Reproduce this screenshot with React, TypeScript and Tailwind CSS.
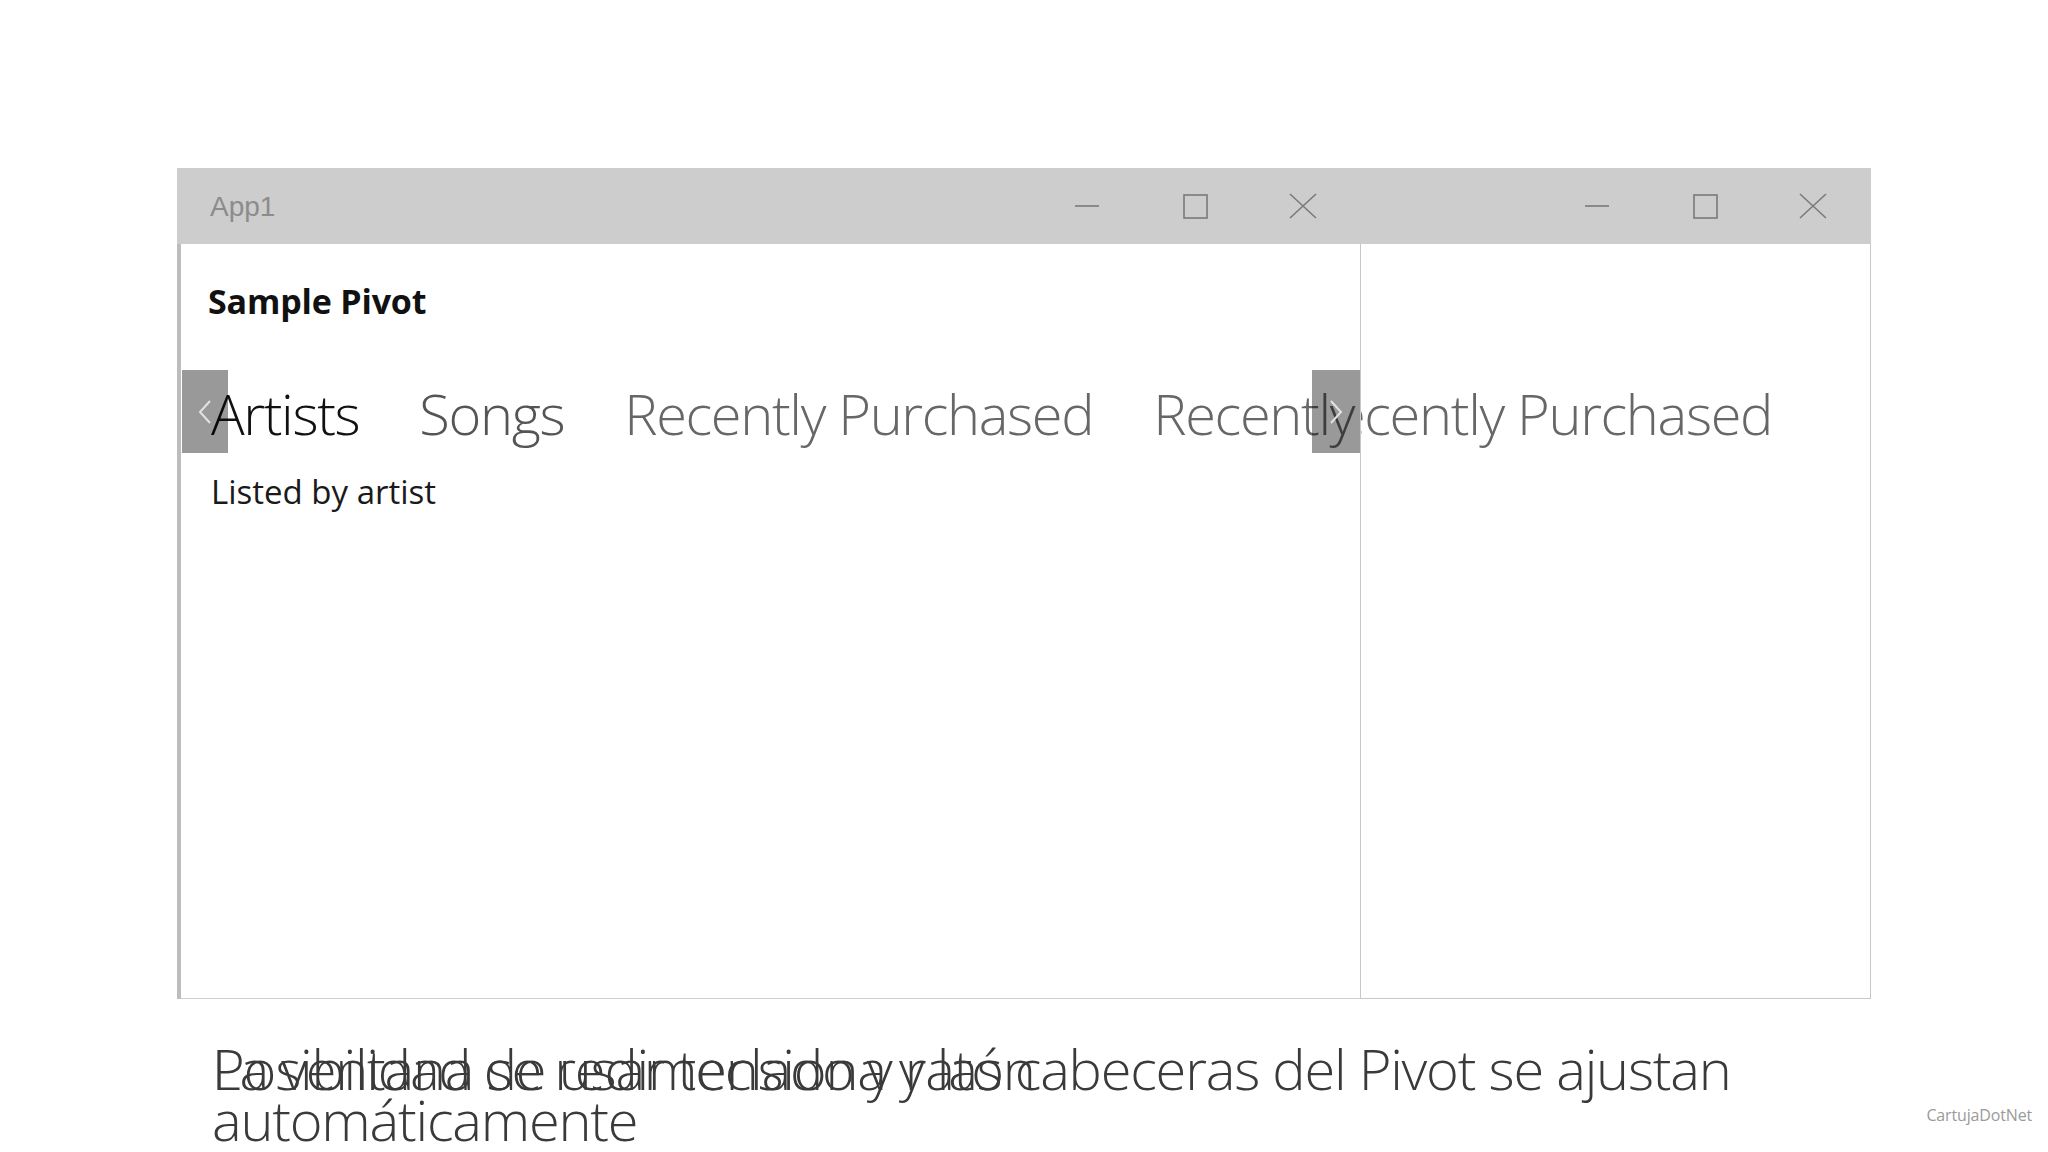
import React from "react";

const headers = [
  { label: "Artists", color: "text-[#111111]" },
  { label: "Songs", color: "text-[#555555]" },
  { label: "Recently Purchased", color: "text-[#676767]" },
  { label: "Recently Purchased", color: "text-[#676767]" },
];

function CaptionButtons() {
  return (
    <div className="flex items-center">
      <div className="w-[108px] h-[76px] flex items-center justify-center">
        <svg width="26" height="4" viewBox="0 0 26 4">
          <line x1="1" y1="2" x2="25" y2="2" stroke="#7a7a7a" strokeWidth="1.6" />
        </svg>
      </div>
      <div className="w-[108px] h-[76px] flex items-center justify-center">
        <svg width="25" height="25" viewBox="0 0 25 25">
          <rect x="1" y="1" width="23" height="23" fill="none" stroke="#7a7a7a" strokeWidth="1.6" />
        </svg>
      </div>
      <div className="w-[108px] h-[76px] flex items-center justify-center">
        <svg width="28" height="26" viewBox="0 0 28 26">
          <path d="M1 1 L27 25 M27 1 L1 25" stroke="#7a7a7a" strokeWidth="1.6" fill="none" />
        </svg>
      </div>
    </div>
  );
}

function Chevron({ dir }: { dir: "left" | "right" }) {
  return (
    <svg width="16" height="26" viewBox="0 0 16 26">
      {dir === "left" ? (
        <polyline points="13,2 3,13 13,24" fill="none" stroke="#e2e2e2" strokeWidth="2" />
      ) : (
        <polyline points="3,2 13,13 3,24" fill="none" stroke="#e2e2e2" strokeWidth="2" />
      )}
    </svg>
  );
}

export default function App() {
  return (
    <div className="w-[2048px] h-[1152px] overflow-hidden bg-white font-['Open_Sans',sans-serif]">
      {/* Window */}
      <div className="ml-[177px] pt-[168px] w-[1694px]">
        {/* Title bar */}
        <div className="flex h-[76px] bg-[#cdcdcd]">
          <div className="w-[1183px] flex items-center justify-between pl-[33px] pr-[3px]">
            <span className="text-[28px] text-[#8c8c8c] font-['Liberation_Sans',sans-serif] mt-[2px]">App1</span>
            <CaptionButtons />
          </div>
          <div className="flex-1 flex items-center justify-end pr-[4px]">
            <CaptionButtons />
          </div>
        </div>

        {/* Body */}
        <div className="flex h-[755px] border-l-[4px] border-[#bdbdbd]">
          {/* Left pane */}
          <div className="w-[1179px] flex flex-col pt-[37px] border-b border-[#cfcfcf]">
            <h1 className="pl-[27px] text-[34px] leading-[40px] font-bold text-[#111111] tracking-[-0.005em]">
              Sample Pivot
            </h1>
            <div className="relative mt-[49px] h-[83px] overflow-hidden">
              <div className="flex gap-[60px] pl-[30px] whitespace-nowrap">
                {headers.map((h, i) => (
                  <span
                    key={i}
                    className={`text-[56px] leading-[87px] font-light tracking-[-0.024em] ${h.color}`}
                  >
                    {h.label}
                  </span>
                ))}
              </div>
              <div className="absolute left-[1px] top-0 w-[46px] h-[83px] bg-black/40 flex items-center justify-center">
                <Chevron dir="left" />
              </div>
              <div className="absolute right-0 top-0 w-[48px] h-[83px] bg-black/40 flex items-center justify-center">
                <Chevron dir="right" />
              </div>
            </div>
            <p className="pl-[30px] mt-[19px] text-[33px] leading-[40px] text-[#1a1a1a]">
              Listed by artist
            </p>
          </div>

          {/* Right pane */}
          <div className="flex-1 flex flex-col border-l border-r border-b border-[#c8c8c8] overflow-hidden">
            <div className="mt-[126px] h-[83px] whitespace-nowrap">
              <span className="block -ml-[58px] text-[56px] leading-[87px] font-light tracking-[-0.024em] text-[#676767]">
                Recently Purchased
              </span>
            </div>
          </div>
        </div>
      </div>

      {/* Caption */}
      <div className="flex items-start justify-between mt-[44px] pl-[212px] pr-[16px]">
        <div className="relative text-[56px] leading-[51px] font-light text-[#3a3a3a] tracking-[-0.022em]">
          <p>
            La ventana se redimensiona y las cabeceras del Pivot se ajustan
            <br />
            automáticamente
          </p>
          <p className="absolute left-0 top-0 whitespace-nowrap">Posibilidad de usar teclado y ratón</p>
        </div>
        <span className="mt-[60px] text-[16px] text-[#9a9a9a] tracking-[-0.01em]">CartujaDotNet</span>
      </div>
    </div>
  );
}
